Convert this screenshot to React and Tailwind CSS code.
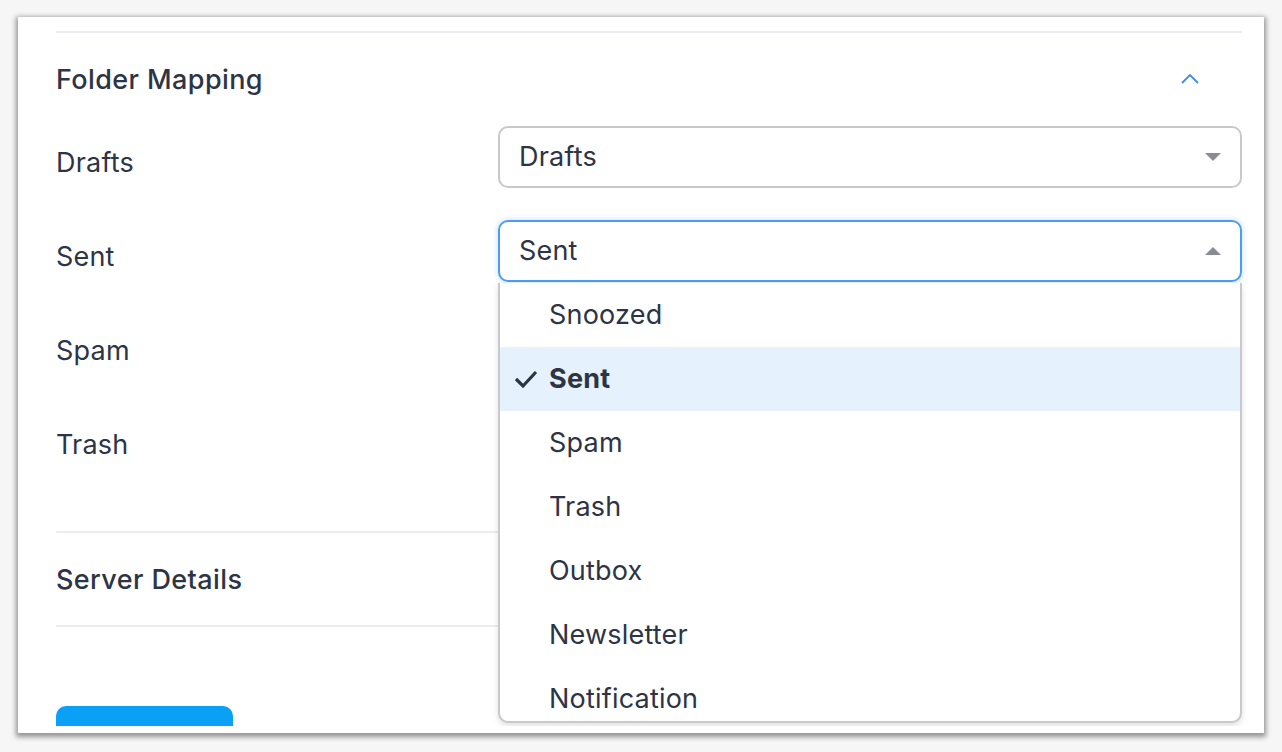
import React from "react";

const options = ["Snoozed", "Sent", "Spam", "Trash", "Outbox", "Newsletter", "Notification"];

const rows = [
    { label: "Drafts", value: "Drafts" },
    { label: "Sent", value: "Sent", open: true },
    { label: "Spam", value: "Spam" },
    { label: "Trash", value: "Trash" },
];

const Caret = ({ up }) => (
    <svg width="18" height="10" viewBox="0 0 18 10" className="shrink-0">
        {up ? <path d="M9 1 L17 9 L1 9 Z" fill="#8a8c95" /> : <path d="M1 1 L17 1 L9 9 Z" fill="#8a8c95" />}
    </svg>
);

const App = () => {
    return (
        <div
            className="w-[1282px] h-[752px] bg-[#f6f6f6] pt-[17px] pl-[18px] pr-[18px] text-[#2d3445] tracking-[0.2px]"
            style={{ fontFamily: "Inter, 'Noto Sans', sans-serif" }}
        >
            <div className="h-[716px] bg-white shadow-[0_2px_5px_2px_rgba(0,0,0,0.4)]">
                <div className="h-[709px] overflow-hidden pl-[38px] pr-[22px] pt-[14px]">
                    <div className="border-t-2 border-[#e9edf2]"></div>

                    <div className="h-[93px] flex items-center justify-between">
                        <h2 className="text-[27px] font-medium tracking-[0.4px] mt-[2px]">Folder Mapping</h2>
                        <svg width="20" height="12" viewBox="0 0 20 12" className="mr-[42px] mt-[-2px]">
                            <path d="M2 10 L10 2 L18 10" fill="none" stroke="#3a8ee6" strokeWidth="1.8" />
                        </svg>
                    </div>

                    <div className="flex flex-col gap-[32px]">
                        {rows.map((row) => (
                            <div key={row.label} className="flex items-start h-[62px]">
                                <div className="w-[442px] pt-[19px] text-[27px] leading-[36px]">{row.label}</div>
                                <div className="relative flex-1">
                                    <div
                                        className={`h-[62px] flex items-center justify-between pl-[19px] pr-[18px] rounded-[10px] border-2 ${
                                            row.open
                                                ? "border-[#4d9cf2] shadow-[0_0_4px_2px_rgba(77,156,242,0.18)]"
                                                : "border-[#c8c8cd]"
                                        }`}
                                    >
                                        <span className="text-[27px] leading-[36px] mt-[-1px]">{row.value}</span>
                                        <Caret up={row.open} />
                                    </div>
                                    {row.open && (
                                        <div className="absolute z-10 left-0 right-0 top-[63px] h-[440px] overflow-hidden bg-white border-2 border-t-0 border-[#c8c8cd] rounded-b-[10px] shadow-[0_3px_6px_rgba(0,0,0,0.12)]">
                                            {options.map((opt) => (
                                                <div
                                                    key={opt}
                                                    className={`h-[64px] flex items-center text-[27px] ${
                                                        opt === row.value ? "bg-[#e5f1fc] font-bold" : ""
                                                    }`}
                                                >
                                                    <div className="w-[49px] pl-[14px] flex items-center">
                                                        {opt === row.value && (
                                                            <svg width="24" height="20" viewBox="0 0 24 20">
                                                                <path d="M2 10 L9 17 L22 3" fill="none" stroke="#2d3445" strokeWidth="3.2" />
                                                            </svg>
                                                        )}
                                                    </div>
                                                    <span>{opt}</span>
                                                </div>
                                            ))}
                                        </div>
                                    )}
                                </div>
                            </div>
                        ))}
                    </div>

                    <div className="mt-[61px] border-t-2 border-[#e9edf2]"></div>
                    <div className="h-[92px] flex items-center">
                        <h2 className="text-[27px] font-medium tracking-[0.4px] mt-[2px]">Server Details</h2>
                    </div>
                    <div className="border-t-2 border-[#e9edf2]"></div>

                    <button className="mt-[79px] w-[177px] h-[64px] rounded-[10px] bg-[#0aa0f5] text-white text-[18px]">
                        Save
                    </button>
                </div>
            </div>
        </div>
    );
};

export default App;
